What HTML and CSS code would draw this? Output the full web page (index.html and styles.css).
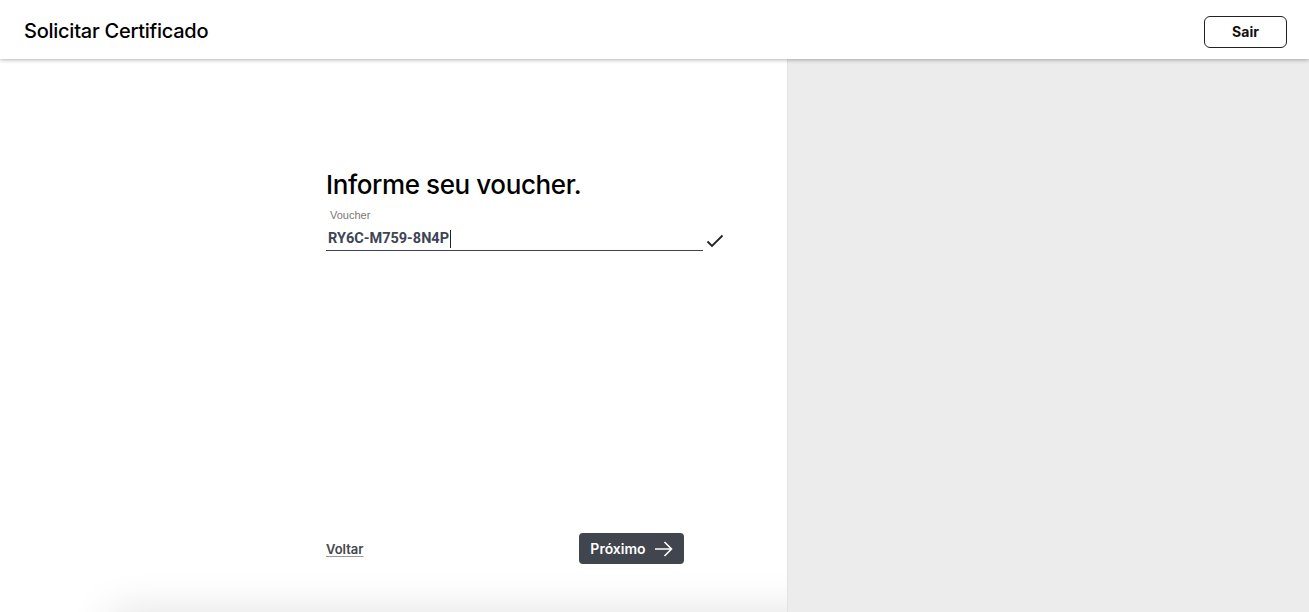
FILE: index.html
```html
<!DOCTYPE html>
<html lang="pt-BR">

<head>
    <meta charset="UTF-8">
    <meta name="viewport" content="width=device-width,initial-scale=1">
    <link rel="stylesheet" href="styles.css">
    <title>Solicitar Certificado</title>
</head>

<body>
    <header class="topbar">
        <h1 class="topbar-title">Solicitar Certificado</h1>
        <button class="button-outline">Sair</button>
    </header>
    <main class="layout">
        <section class="panel-form">
            <div class="form">
                <h2 class="form-title">Informe seu voucher.</h2>
                <label class="field">
                    <span class="field-label">Voucher</span>
                    <span class="field-row">
                        <span class="field-input">RY6C-M759-8N4P<span class="caret"></span></span>
                        <svg class="field-check" width="18" height="14" viewBox="0 0 18 14">
                            <path d="M1.5 7.5 L6 12 L16.5 1.5" fill="none" stroke="#222" stroke-width="1.8" />
                        </svg>
                    </span>
                </label>
            </div>
            <div class="form-actions">
                <a class="link-back" href="#">Voltar</a>
                <button class="button-action">Próximo
                    <svg width="19" height="16" viewBox="0 0 19 16">
                        <path d="M1 8 H17.5 M10.5 1 L17.5 8 L10.5 15" fill="none" stroke="#fff" stroke-width="1.6" />
                    </svg>
                </button>
            </div>
        </section>
        <aside class="panel-side"></aside>
    </main>
    <footer class="sheet"></footer>
</body>

</html>
```
FILE: styles.css
```css
*,
*::before,
*::after {
    box-sizing: border-box;
    padding: 0;
    margin: 0;
}

body {
    height: 100vh;
    overflow: hidden;
    background: #fff;
    font-family: Inter, "Liberation Sans", sans-serif;
    color: #000;
}

.topbar {
    position: relative;
    z-index: 2;
    display: flex;
    justify-content: space-between;
    align-items: center;
    height: 59px;
    padding: 0 22px 0 24px;
    background: #fff;
    box-shadow: 0 1px 4px 0 rgba(0, 0, 0, 0.3);
}

.topbar-title {
    font-size: 20px;
    font-weight: 500;
    letter-spacing: -0.25px;
    padding-top: 2px;
}

.button-outline {
    width: 83px;
    height: 32px;
    margin-top: 4px;
    background: #fff;
    border: 1px solid #222;
    border-radius: 6px;
    font-family: Inter, sans-serif;
    font-size: 14px;
    font-weight: 700;
    color: #111;
}

.layout {
    display: flex;
    height: 553px;
}

.panel-form {
    display: flex;
    flex-direction: column;
    justify-content: space-between;
    width: 787px;
    padding: 110px 0 48px 326px;
}

.panel-side {
    flex: 1;
    background: #ececec;
    border-left: 1px solid #e3e3e3;
}

.form-title {
    font-size: 26px;
    font-weight: 500;
    letter-spacing: -0.4px;
    line-height: 32px;
}

.field {
    display: block;
    margin-top: 8px;
}

.field-label {
    display: block;
    padding-left: 4px;
    font-family: "Liberation Sans", sans-serif;
    font-size: 11px;
    color: #777;
}

.field-row {
    display: flex;
    align-items: flex-end;
    margin-top: 6px;
}

.field-input {
    display: flex;
    align-items: center;
    width: 377px;
    height: 24px;
    padding-left: 2px;
    border-bottom: 1.5px solid #3d4250;
    font-family: Roboto, sans-serif;
    font-size: 14.5px;
    font-weight: 700;
    color: #3d4454;
}

.caret {
    display: inline-block;
    width: 1px;
    height: 18px;
    margin-left: 1px;
    background: #222;
}

.field-check {
    margin: 0 0 3px 3px;
}

.form-actions {
    display: flex;
    justify-content: space-between;
    align-items: center;
    width: 358px;
}

.link-back {
    font-size: 13px;
    font-weight: 600;
    color: #43464c;
    text-decoration: underline;
    text-underline-offset: 2px;
    text-decoration-color: #999;
}

.button-action {
    display: flex;
    justify-content: center;
    align-items: center;
    gap: 8px;
    width: 105px;
    height: 31px;
    padding: 0;
    background: #41454d;
    border: none;
    border-radius: 4px;
    font-family: Inter, sans-serif;
    font-size: 14px;
    font-weight: 600;
    color: #fff;
}

.button-action svg {
    flex-shrink: 0;
}

.sheet {
    height: 200px;
    margin: 0 110px;
    background: #fff;
    box-shadow: 0 0 40px 0 rgba(0, 0, 0, 0.12);
}
```
